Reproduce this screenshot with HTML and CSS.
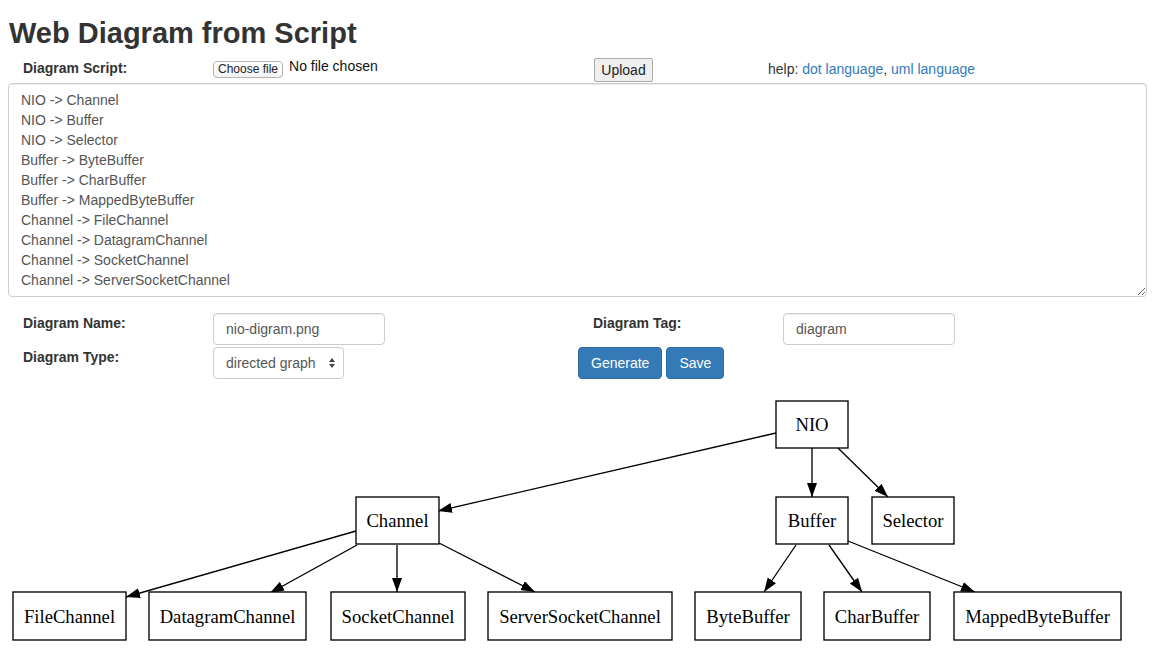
FILE: index.html
```html
<!DOCTYPE html>
<html lang="en">
<head>
<meta charset="utf-8">
<title>Web Diagram from Script</title>
<link rel="stylesheet" href="styles.css">
</head>
<body>
<div class="page">
  <h1 class="title">Web Diagram from Script</h1>

  <div class="row row-script">
    <label class="lbl c1">Diagram Script:</label>
    <div class="file c2">
      <button class="choose" type="button">Choose file</button>
      <span class="nofile">No file chosen</span>
    </div>
    <div class="c4 pad16"><button class="upload" type="button">Upload</button></div>
    <div class="help c5">help: <a href="#">dot language</a>, <a href="#">uml language</a></div>
  </div>

  <textarea class="script" rows="10">NIO -> Channel
NIO -> Buffer
NIO -> Selector
Buffer -> ByteBuffer
Buffer -> CharBuffer
Buffer -> MappedByteBuffer
Channel -> FileChannel
Channel -> DatagramChannel
Channel -> SocketChannel
Channel -> ServerSocketChannel</textarea>

  <div class="row row-name">
    <label class="lbl c1">Diagram Name:</label>
    <div class="c2 pad15"><input class="field" type="text" value="nio-digram.png"></div>
    <label class="lbl c4 pad15">Diagram Tag:</label>
    <div class="c5 pad15"><input class="field" type="text" value="diagram"></div>
  </div>

  <div class="row row-type">
    <label class="lbl c1">Diagram Type:</label>
    <div class="c2 pad15">
      <div class="selectwrap">
        <select class="sel"><option>directed graph</option></select>
        <svg class="arrows" width="8" height="12" viewBox="0 0 8 12"><path d="M4 1 L7 5 L1 5 Z M4 11 L7 7 L1 7 Z" fill="#444"/></svg>
      </div>
    </div>
    <div class="c4 btns">
      <button class="btn" type="button">Generate</button>
      <button class="btn" type="button">Save</button>
    </div>
  </div>

  <svg class="graph" width="1154" height="260" viewBox="0 392 1154 260">
    <defs>
      <marker id="ah" markerUnits="userSpaceOnUse" markerWidth="16" markerHeight="12" refX="14" refY="5" orient="auto">
        <path d="M0,0 L14,5 L0,10 Z" fill="#000"/>
      </marker>
    </defs>
    <g class="edges">
      <line x1="776" y1="433" x2="438" y2="511"/>
      <line x1="812" y1="448" x2="812" y2="497"/>
      <line x1="838" y1="448" x2="888" y2="497"/>
      <line x1="356" y1="531" x2="126" y2="597"/>
      <line x1="357" y1="545" x2="270" y2="593"/>
      <line x1="397" y1="545" x2="397" y2="592"/>
      <line x1="439" y1="543" x2="535" y2="592"/>
      <line x1="796" y1="545" x2="764" y2="592"/>
      <line x1="829" y1="545" x2="862" y2="592"/>
      <line x1="848" y1="541" x2="975" y2="592"/>
    </g>
    <g class="nodes">
      <rect x="776" y="401" width="72" height="47"/><text x="812" y="431">NIO</text>
      <rect x="356" y="497" width="83" height="47"/><text x="397.5" y="527">Channel</text>
      <rect x="776" y="497" width="72" height="47"/><text x="812" y="527">Buffer</text>
      <rect x="872" y="497" width="82" height="47"/><text x="913" y="527">Selector</text>
      <rect x="13" y="592" width="113" height="48"/><text x="69.5" y="623">FileChannel</text>
      <rect x="149" y="592" width="157" height="48"/><text x="227.5" y="623">DatagramChannel</text>
      <rect x="331" y="592" width="134" height="48"/><text x="398" y="623">SocketChannel</text>
      <rect x="488" y="592" width="184" height="48"/><text x="580" y="623">ServerSocketChannel</text>
      <rect x="695" y="592" width="106" height="48"/><text x="748" y="623">ByteBuffer</text>
      <rect x="824" y="592" width="106" height="48"/><text x="877" y="623">CharBuffer</text>
      <rect x="954" y="592" width="167" height="48"/><text x="1037.5" y="623">MappedByteBuffer</text>
    </g>
  </svg>
</div>
</body>
</html>
```
FILE: styles.css
```css
html, body {
  margin: 0;
  padding: 0;
  overflow: hidden;
  background: #fff;
}
body {
  font-family: "Liberation Sans", Arial, sans-serif;
  font-size: 14px;
  line-height: 20px;
  color: #333;
}
.page {
  padding: 17px 8px 0 8px;
}
.title {
  margin: 0 0 9px 1px;
  font-size: 29px;
  line-height: 32px;
  font-weight: bold;
  color: #333;
}
.row {
  display: grid;
  grid-template-columns: repeat(6, 190px);
  align-items: start;
}
.c1 { grid-column: 1; }
.c2 { grid-column: 2 / span 2; }
.c4 { grid-column: 4; }
.c5 { grid-column: 5 / span 2; }
.pad15 { padding-left: 15px; }
.pad16 { padding-left: 16px; }
.lbl {
  padding-left: 15px;
  font-weight: bold;
  line-height: 20px;
}
.row-script {
  height: 25px;
}
.file {
  display: flex;
  align-items: flex-start;
  padding-left: 15px;
}
.choose {
  margin-top: 3px;
  height: 17px;
  padding: 0 4px;
  font-family: "Liberation Sans", Arial, sans-serif;
  font-size: 12px;
  line-height: 15px;
  color: #222;
  background: linear-gradient(#ffffff, #f3f3f3);
  border: 1px solid #b5b5b5;
  border-radius: 4px;
}
.nofile {
  margin-left: 6px;
  line-height: 16px;
  color: #111;
}
.upload {
  height: 24px;
  width: 59px;
  padding: 0;
  font-family: "Liberation Sans", Arial, sans-serif;
  font-size: 14px;
  color: #222;
  background: #efefef;
  border: 1px solid #a9a9a9;
  border-radius: 2px;
}
.help {
  margin-top: 1px;
}
.help a {
  color: #337ab7;
  text-decoration: none;
}
.script {
  display: block;
  box-sizing: border-box;
  width: 1139px;
  height: 214px;
  margin: 0;
  padding: 6px 12px;
  font-family: "Liberation Sans", Arial, sans-serif;
  font-size: 14px;
  line-height: 20px;
  color: #555;
  border: 1px solid #ccc;
  border-radius: 4px;
  box-shadow: inset 0 1px 1px rgba(0, 0, 0, 0.075);
}
.row-name {
  margin-top: 16px;
}
.row-type {
  margin-top: 2px;
}
.field {
  box-sizing: border-box;
  width: 172px;
  height: 32px;
  padding: 0 12px;
  font-family: "Liberation Sans", Arial, sans-serif;
  font-size: 14px;
  color: #555;
  border: 1px solid #ccc;
  border-radius: 4px;
  box-shadow: inset 0 1px 1px rgba(0, 0, 0, 0.075);
  outline: none;
}
.selectwrap {
  position: relative;
  width: 131px;
  height: 32px;
}
.sel {
  appearance: none;
  -webkit-appearance: none;
  box-sizing: border-box;
  width: 131px;
  height: 32px;
  padding: 0 12px;
  font-family: "Liberation Sans", Arial, sans-serif;
  font-size: 14px;
  color: #555;
  background: #fff;
  border: 1px solid #ccc;
  border-radius: 4px;
}
.arrows {
  position: absolute;
  right: 8px;
  top: 10px;
  pointer-events: none;
}
.btns {
  display: flex;
  gap: 4px;
}
.btn {
  height: 32px;
  padding: 0 12px;
  font-family: "Liberation Sans", Arial, sans-serif;
  font-size: 14px;
  color: #fff;
  background: #337ab7;
  border: 1px solid #2e6da4;
  border-radius: 4px;
}
.graph {
  display: block;
  margin: 13px 0 0 -8px;
}
.edges line {
  stroke: #000;
  stroke-width: 1.33;
  marker-end: url(#ah);
}
.nodes rect {
  fill: #fff;
  stroke: #000;
  stroke-width: 1.33;
}
.nodes text {
  font-family: "Liberation Serif", "Times New Roman", serif;
  font-size: 18.67px;
  text-anchor: middle;
  fill: #000;
}
```
